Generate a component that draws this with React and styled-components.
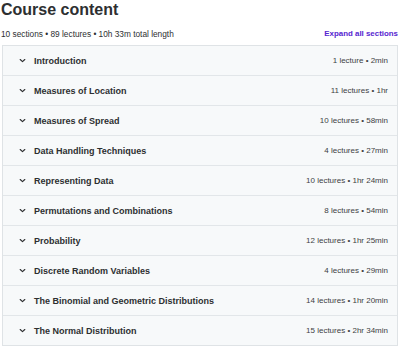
import React from 'react';
import styled, { createGlobalStyle } from 'styled-components';

const GlobalStyle = createGlobalStyle`
  body {
    margin: 0;
    background: #ffffff;
    font-family: "Liberation Sans", Arial, sans-serif;
    color: #2d2f31;
  }
`;

const sections = [
	{ title: 'Introduction', meta: '1 lecture • 2min' },
	{ title: 'Measures of Location', meta: '11 lectures • 1hr' },
	{ title: 'Measures of Spread', meta: '10 lectures • 58min' },
	{ title: 'Data Handling Techniques', meta: '4 lectures • 27min' },
	{ title: 'Representing Data', meta: '10 lectures • 1hr 24min' },
	{ title: 'Permutations and Combinations', meta: '8 lectures • 54min' },
	{ title: 'Probability', meta: '12 lectures • 1hr 25min' },
	{ title: 'Discrete Random Variables', meta: '4 lectures • 29min' },
	{ title: 'The Binomial and Geometric Distributions', meta: '14 lectures • 1hr 20min' },
	{ title: 'The Normal Distribution', meta: '15 lectures • 2hr 34min' }
];

const Chevron = () => (
	<svg width="7" height="7" viewBox="0 0 7 7" fill="none">
		<path d="M1.2 2.5 L3.5 4.7 L5.8 2.5" stroke="#2d2f31" strokeWidth="1.1" strokeLinecap="round" strokeLinejoin="round" />
	</svg>
);

export default function App() {
	return (
		<Page>
			<GlobalStyle />
			<Title>Course content</Title>
			<Summary>
				<span>10 sections • 89 lectures • 10h 33m total length</span>
				<ExpandLink>Expand all sections</ExpandLink>
			</Summary>
			<Panel>
				{sections.map(s => (
					<Row key={ s.title }>
						<ChevronBox>
							<Chevron />
						</ChevronBox>
						<SectionTitle>{s.title}</SectionTitle>
						<Meta>{s.meta}</Meta>
					</Row>
				))}
			</Panel>
		</Page>
	);
}

const Page = styled.div`
  width: 400px;
  padding: 1px 2px 0 1px;
  box-sizing: border-box;
`;

const Title = styled.h2`
  margin: 0;
  height: 21px;
  font-size: 16px;
  line-height: 17px;
  font-weight: 700;
  color: #2d2f31;
`;

const Summary = styled.div`
  display: flex;
  justify-content: space-between;
  align-items: center;
  height: 23px;
  font-size: 8.3px;
  color: #2d2f31;
`;

const ExpandLink = styled.span`
  font-weight: 700;
  color: #5624d0;
  font-size: 7.9px;
`;

const Panel = styled.div`
  border: 1px solid #dfe3e6;
  margin-left: 1px;
`;

const Row = styled.div`
  display: flex;
  align-items: center;
  height: 29px;
  background: #f7f9fa;
  padding: 0 9px 0 16px;
  & + & {
    border-top: 1px solid #e2e6e9;
  }
`;

const ChevronBox = styled.span`
  display: flex;
  width: 15px;
`;

const SectionTitle = styled.span`
  flex: 1;
  font-size: 9px;
  font-weight: 700;
  color: #2d2f31;
`;

const Meta = styled.span`
  font-size: 8px;
  color: #3e4143;
`;
